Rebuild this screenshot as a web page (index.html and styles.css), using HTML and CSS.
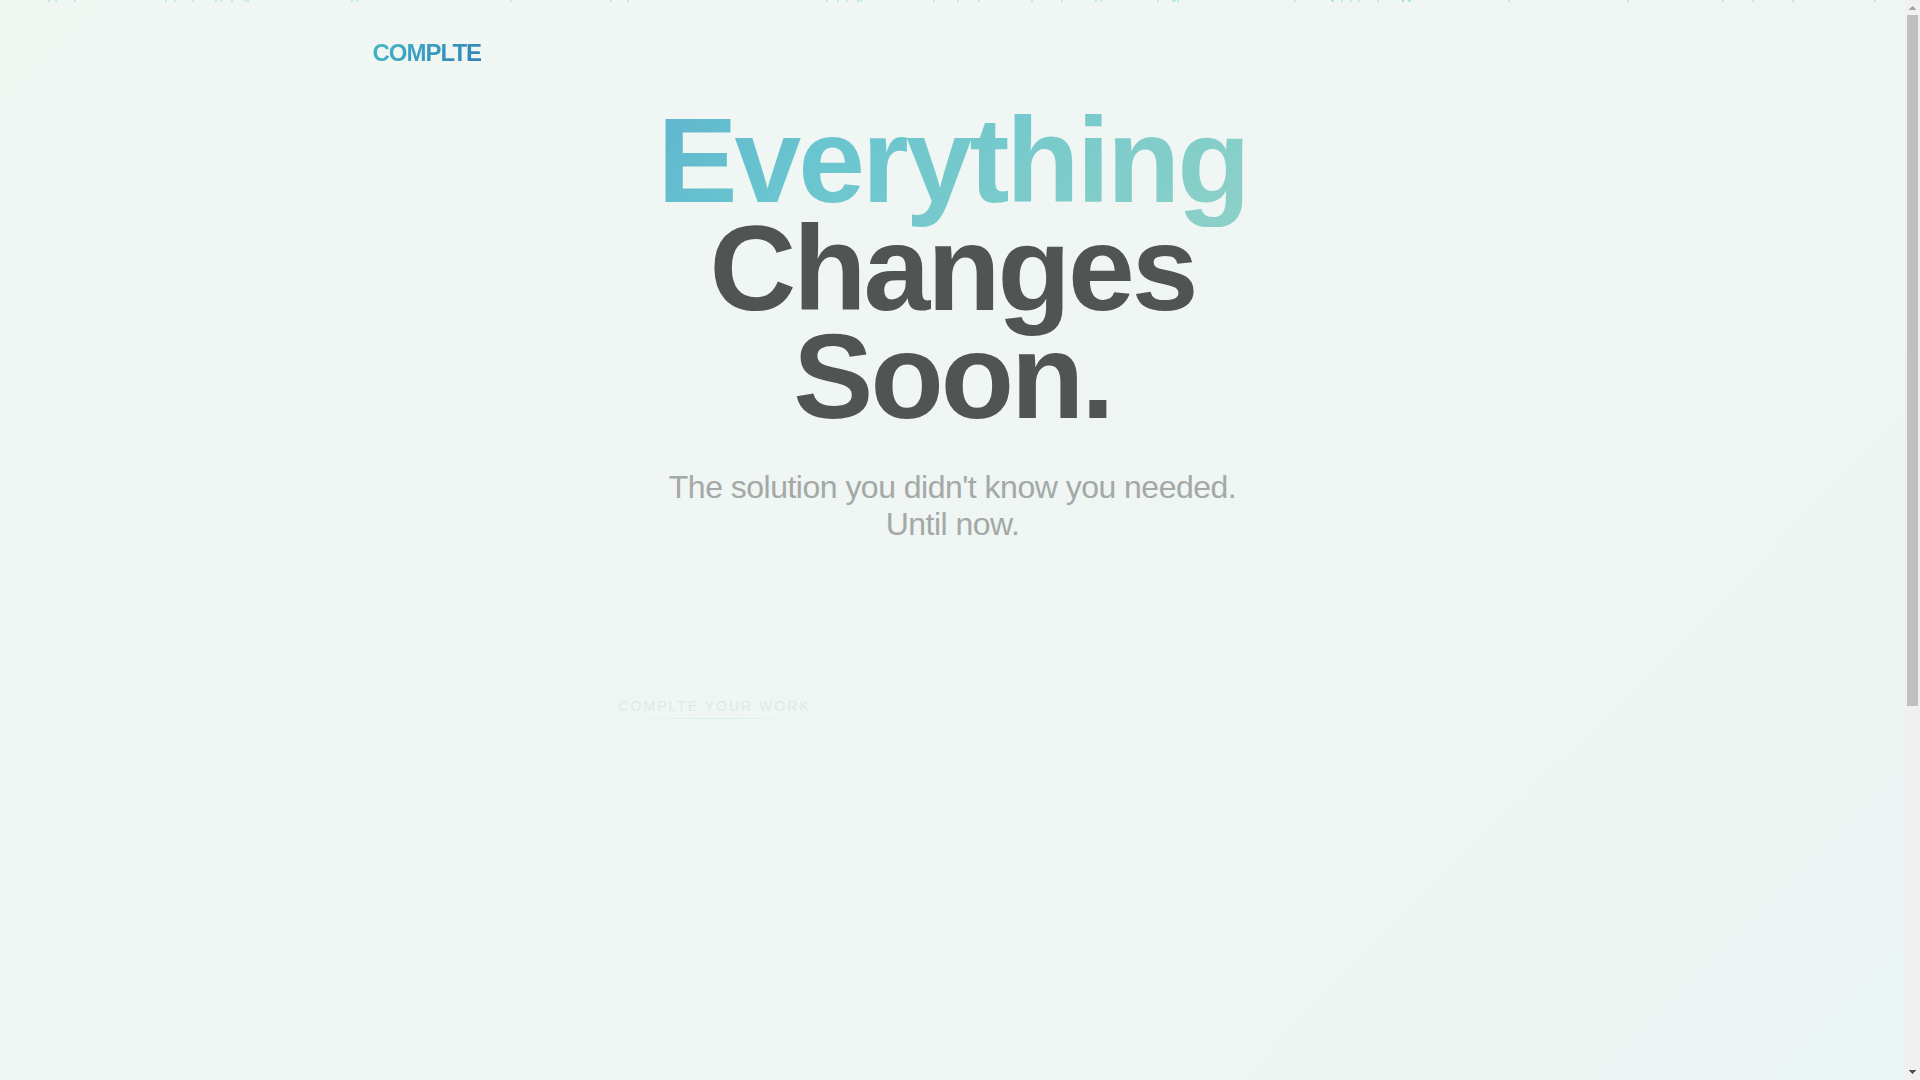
FILE: index.html
```html
<!DOCTYPE html>
<html lang="en">
<head>
    <meta charset="UTF-8">
    <meta name="viewport" content="width=device-width, initial-scale=1.0">
    <title>COMPLTE</title>
    <link rel="stylesheet" href="styles.css">
</head>
<body>

    <div class="page">
        <svg class="rain" width="1905" height="2" aria-hidden="true">
            <path class="drops" d="M48 0h2v2h-2zM55 0h2v2h-2zM74 0h2v2h-2zM165 0h2v2h-2zM174 0h2v2h-2zM192 0h2v2h-2zM215 0h2v2h-2zM220 0h2v2h-2zM231 0h2v2h-2zM244 0h2v2h-2zM247 0h2v2h-2zM351 0h2v2h-2zM356 0h2v2h-2zM510 0h2v2h-2zM610 0h2v2h-2zM627 0h2v2h-2z"/>
            <path class="drops" d="M826 0h2v2h-2zM837 0h2v2h-2zM846 0h2v2h-2zM857 0h2v2h-2zM860 0h2v2h-2zM933 0h2v2h-2zM957 0h2v2h-2zM978 0h2v2h-2zM1031 0h2v2h-2zM1061 0h2v2h-2zM1095 0h2v2h-2zM1100 0h2v2h-2zM1157 0h2v2h-2zM1172 0h4v2h-4zM1177 0h2v2h-2z"/>
            <path class="drops" d="M1294 0h2v2h-2zM1331 0h3v2h-3zM1341 0h2v2h-2zM1350 0h2v2h-2zM1358 0h2v2h-2zM1377 0h2v2h-2zM1402 0h2v2h-2zM1408 0h3v2h-3zM1508 0h2v2h-2zM1627 0h2v2h-2zM1722 0h2v2h-2zM1752 0h2v2h-2zM1792 0h2v2h-2zM1874 0h2v2h-2z"/>
            <!-- overlapping drops -->
            <path class="drops" d="M1332 0h1v2h-1zM1402 0h2v2h-2zM1409 0h1v2h-1z"/>
        </svg>

        <header class="header">
            <div class="logo">COMPLTE</div>
        </header>

        <main class="hero">
            <h1 class="title"><span class="highlight">Everything</span><br>Changes<br>Soon.</h1>
            <p class="subtitle">The solution you didn't know you needed.<br>Until now.</p>
            <div class="tagline-row">
                <p class="tagline">COMPLTE YOUR WORK</p>
            </div>
        </main>
    </div>

    <div class="scrollbar" aria-hidden="true">
        <svg class="arrow-up" width="15" height="15" viewBox="0 0 15 15" shape-rendering="crispEdges">
            <path d="M7 6h1v1h1v1h1v1h1v1H4V9h1V8h1V7h1z"/>
        </svg>
        <div class="track"><div class="thumb"></div></div>
        <svg class="arrow-down" width="15" height="15" viewBox="0 0 15 15" shape-rendering="crispEdges">
            <path d="M4 5h7v1h-1v1H9v1H8v1H7V8H6V7H5V6H4z"/>
        </svg>
    </div>

</body>
</html>
```
FILE: styles.css
```css
* {
    margin: 0;
    padding: 0;
    box-sizing: border-box;
}
body {
    display: flex;
    height: 100vh;
    overflow: hidden;
    font-family: "Liberation Sans", Arial, sans-serif;
}
.page {
    position: relative;
    flex: 1;
    overflow: hidden;
    background: linear-gradient(135deg, #f0f7f3 0%, #eff6f3 35%, #eef5f3 75%, #ebf4f2 90%, #eaf4f4 100%);
}
.rain {
    position: absolute;
    top: 0;
    left: 0;
}
.drops {
    fill: rgba(78, 205, 215, 0.3);
}
.header {
    max-width: 1200px;
    margin: 0 auto;
    padding: 39px 20px 0;
}
.logo {
    display: inline-block;
    font-size: 24px;
    font-weight: bold;
    line-height: 27px;
    letter-spacing: -1px;
    background: linear-gradient(135deg, #45b7c4, #2f80b9);
    background-clip: text;
    -webkit-background-clip: text;
    color: transparent;
}
.hero {
    max-width: 700px;
    margin: 0 auto;
    padding: 40px 16px 0;
    text-align: center;
}
.title {
    font-size: 120px;
    font-weight: bold;
    line-height: 108px;
    letter-spacing: -3px;
    color: #525453;
}
.highlight {
    background: linear-gradient(135deg, #5fb5cf 0%, #69c5cf 30%, #8dd1c7 100%);
    background-clip: text;
    -webkit-background-clip: text;
    color: transparent;
}
.subtitle {
    margin-top: 39px;
    font-size: 32px;
    line-height: 37px;
    letter-spacing: -0.016em;
    color: #a4a8a6;
}
.tagline-row {
    display: flex;
    margin-top: 155px;
}
.tagline {
    position: relative;
    font-size: 14px;
    line-height: 16px;
    letter-spacing: 2px;
    color: #e2e8e6;
}
.tagline::after {
    content: "";
    position: absolute;
    left: 0;
    right: 0;
    bottom: -5px;
    height: 1px;
    background: linear-gradient(90deg, transparent, #d3eeeb, transparent);
}
.scrollbar {
    display: flex;
    flex-direction: column;
    width: 15px;
    background: #f0f0f0;
}
.track {
    flex: 1;
    padding: 0 2px;
}
.thumb {
    height: 65.8%;
    background: #c0c0c0;
}
.arrow-up {
    fill: #a3a3a3;
}
.arrow-down {
    fill: #505050;
}
```
